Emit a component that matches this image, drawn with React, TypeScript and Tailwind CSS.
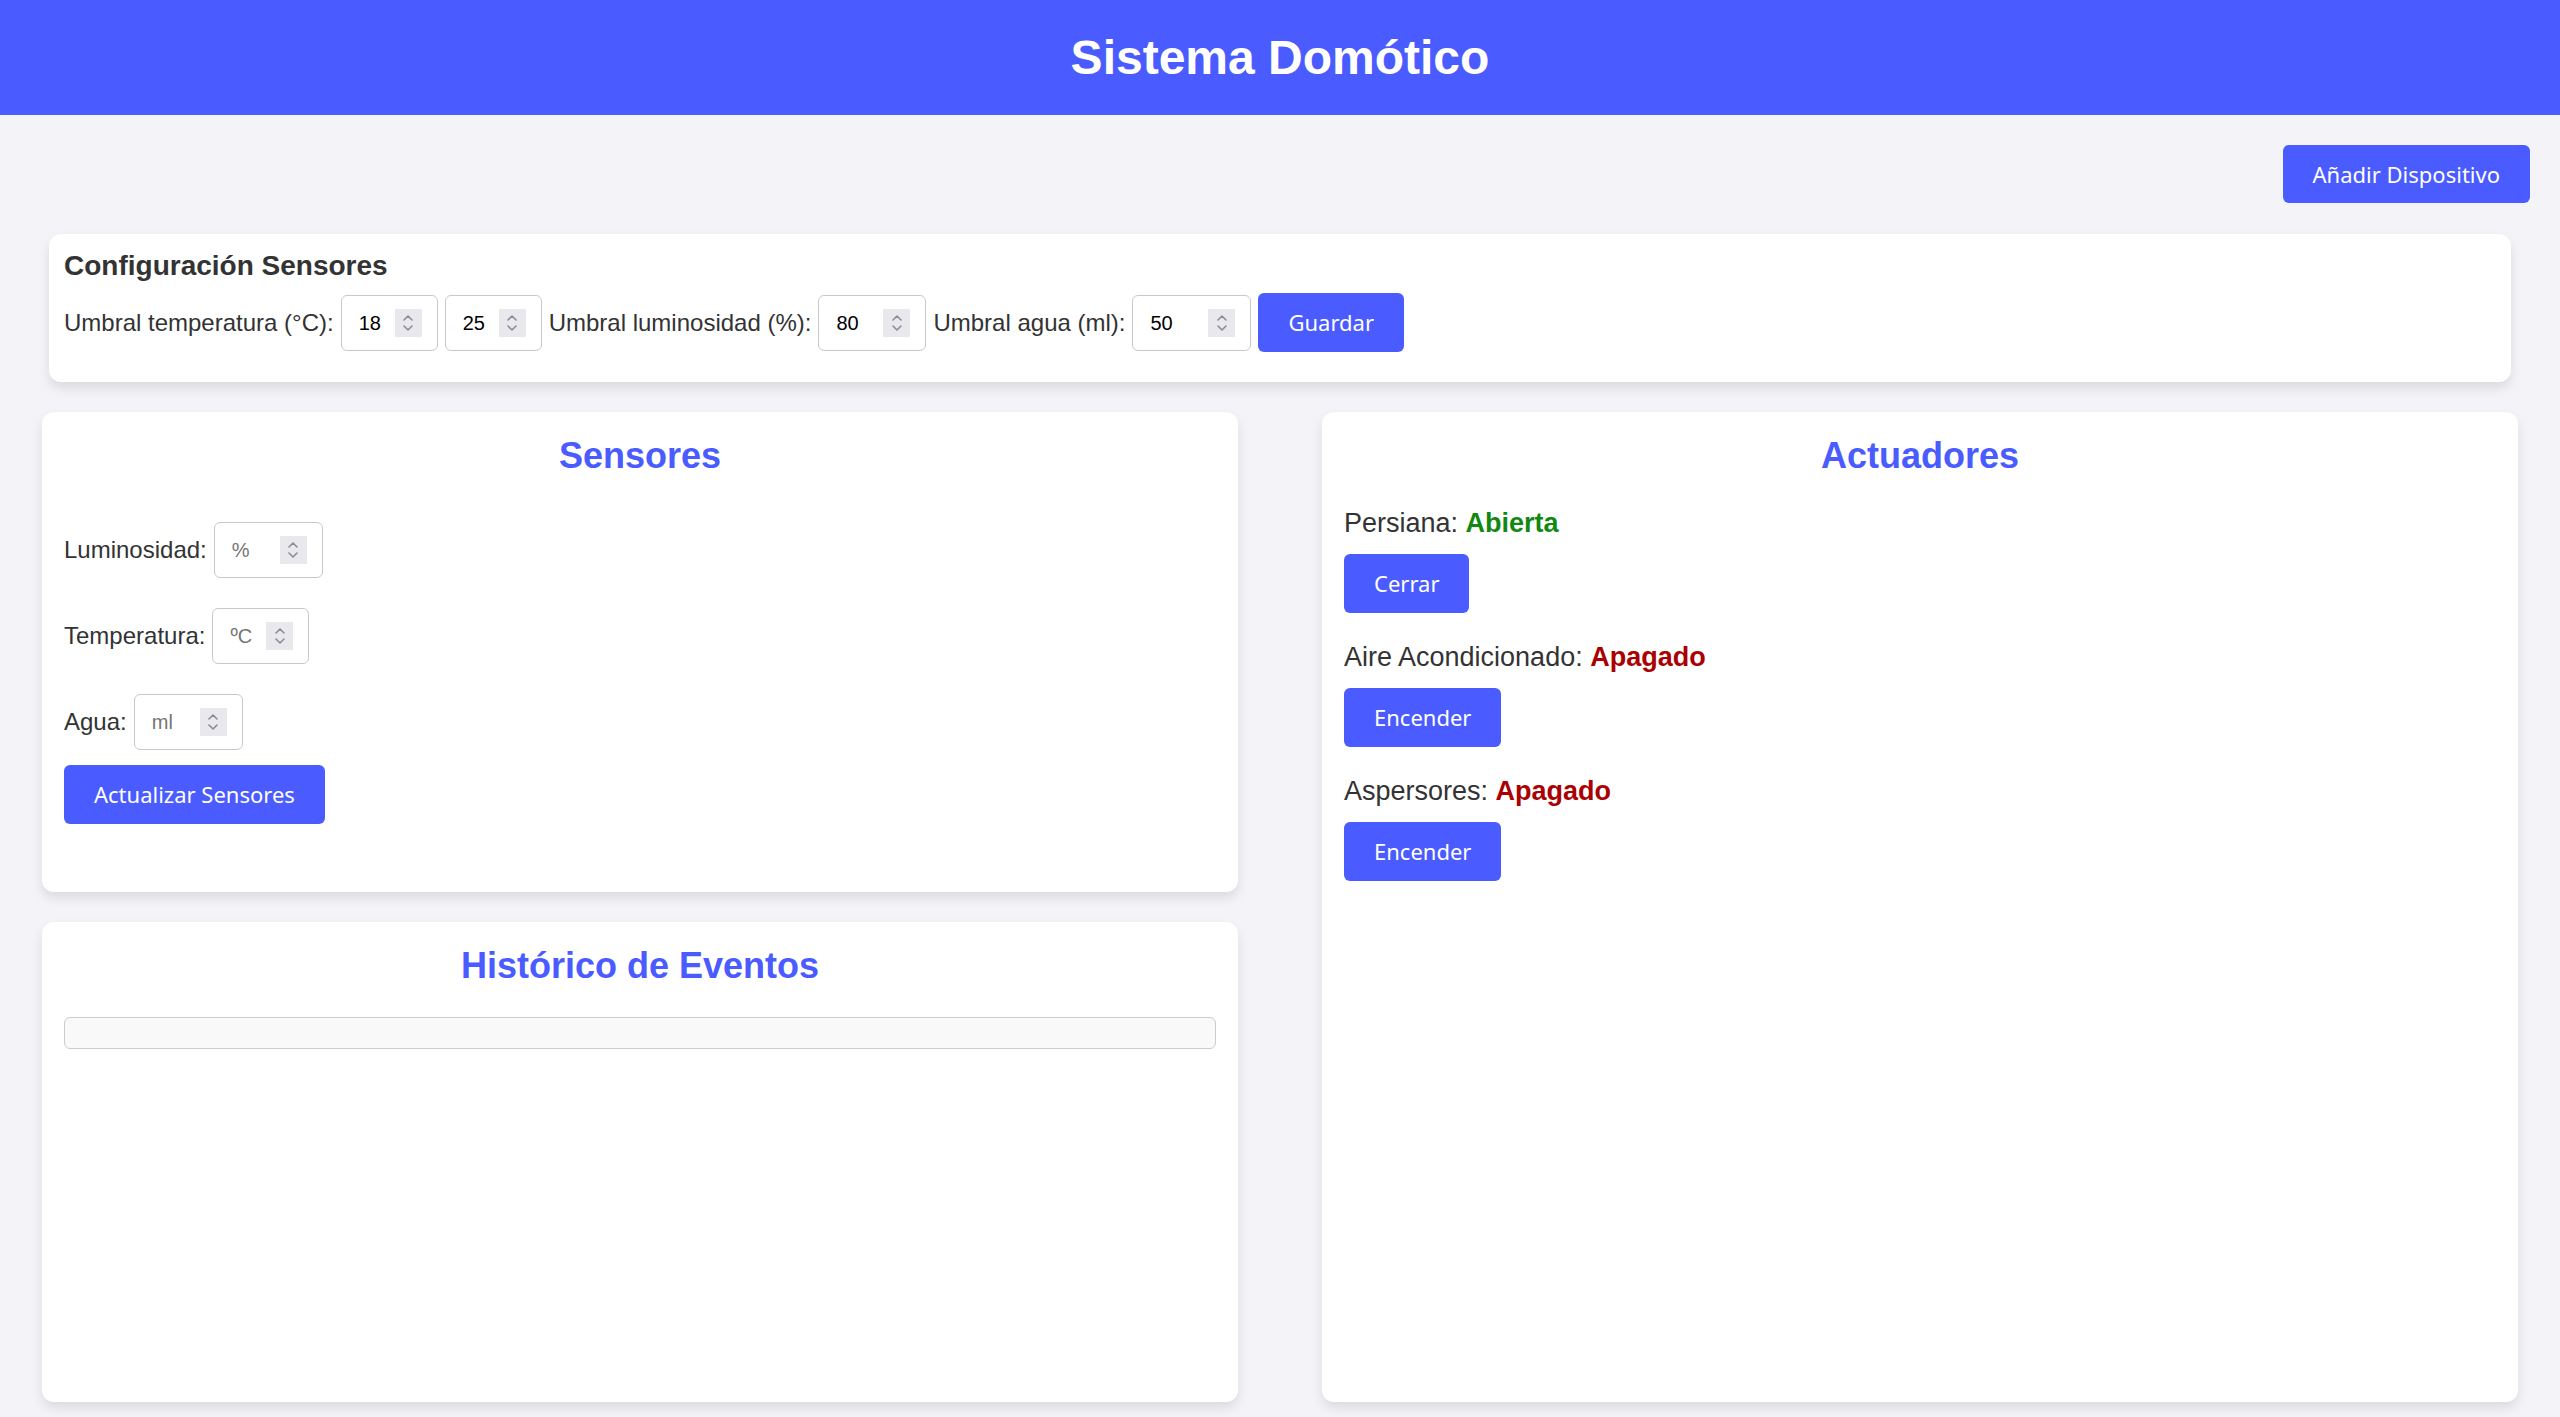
import type { ReactNode } from 'react'

const BLUE = 'bg-[#4a5bff]'

function Spinner() {
  return (
    <span className="flex h-[28px] w-[27px] shrink-0 items-center justify-center bg-[#e9e9ed]">
      <svg width="14" height="22" viewBox="0 0 14 22" fill="none" stroke="#8b8b98" strokeWidth="1.6" strokeLinecap="round" strokeLinejoin="round">
        <path d="M3 8 L7 4 L11 8" />
        <path d="M3 14 L7 18 L11 14" />
      </svg>
    </span>
  )
}

function NumInput({ value, placeholder, width }: { value?: string; placeholder?: string; width: string }) {
  return (
    <span
      className={`flex h-[56px] shrink-0 items-center rounded-[6px] border border-[#c8c8cc] bg-white pr-[15px] pl-[17px] text-[20px] ${width}`}
    >
      <span className={`flex-1 leading-none ${value ? 'text-black' : 'text-[#757575]'}`}>{value ?? placeholder}</span>
      <Spinner />
    </span>
  )
}

function Btn({ children }: { children: ReactNode }) {
  return (
    <button
      type="button"
      className={`${BLUE} flex h-[59px] shrink-0 items-center justify-center rounded-[6px] px-[30px] font-['Noto_Sans',sans-serif] text-[22px] text-white`}
    >
      {children}
    </button>
  )
}

function Card({ children, className = '' }: { children: ReactNode; className?: string }) {
  return (
    <div className={`rounded-[12px] bg-white shadow-[0_6px_12px_rgba(0,0,0,0.1)] ${className}`}>{children}</div>
  )
}

function CardTitle({ children }: { children: ReactNode }) {
  return <h2 className="text-center text-[36px] leading-[41px] font-bold text-[#4a5bff]">{children}</h2>
}

function SensorRow({ label, placeholder, width }: { label: string; placeholder: string; width: string }) {
  return (
    <div className="flex items-center gap-[7px]">
      <span>{label}</span>
      <NumInput placeholder={placeholder} width={width} />
    </div>
  )
}

function Actuator({ name, state, on, action }: { name: string; state: string; on: boolean; action: string }) {
  return (
    <div className="flex flex-col items-start">
      <p className="text-[27px] leading-[31px]">
        {name}: <span className={`font-bold ${on ? 'text-[#118811]' : 'text-[#aa0000]'}`}>{state}</span>
      </p>
      <div className="mt-[15px]">
        <Btn>{action}</Btn>
      </div>
    </div>
  )
}

export default function App() {
  return (
    <div className="min-h-screen bg-[#f4f4f8] font-['Liberation_Sans',Arial,sans-serif] text-[24px] text-[#333]">
      <header className={`${BLUE} flex h-[115px] items-center justify-center`}>
        <h1 className="text-[48px] font-bold text-white">Sistema Domótico</h1>
      </header>

      <div className="flex justify-end pt-[30px] pr-[30px]">
        <button
          type="button"
          className={`${BLUE} flex h-[58px] items-center rounded-[6px] px-[30px] font-['Noto_Sans',sans-serif] text-[22px] text-white`}
        >
          Añadir Dispositivo
        </button>
      </div>

      <Card className="mx-[49px] mt-[31px] px-[15px] pt-[16px] pb-[30px]">
        <h3 className="text-[28px] leading-[32px] font-bold">Configuración Sensores</h3>
        <div className="mt-[11px] flex items-center gap-[7px]">
          <span>Umbral temperatura (°C):</span>
          <NumInput value="18" width="w-[97px]" />
          <NumInput value="25" width="w-[97px]" />
          <span>Umbral luminosidad (%):</span>
          <NumInput value="80" width="w-[108px]" />
          <span>Umbral agua (ml):</span>
          <NumInput value="50" width="w-[119px]" />
          <Btn>Guardar</Btn>
        </div>
      </Card>

      <div className="mt-[30px] grid grid-cols-2 grid-rows-[480px_480px] gap-x-[84px] gap-y-[30px] px-[42px] pb-[15px]">
        <Card className="px-[22px] pt-[23px]">
          <CardTitle>Sensores</CardTitle>
          <div className="mt-[46px] flex flex-col gap-[30px]">
            <SensorRow label="Luminosidad:" placeholder="%" width="w-[109px]" />
            <SensorRow label="Temperatura:" placeholder="ºC" width="w-[97px]" />
            <SensorRow label="Agua:" placeholder="ml" width="w-[109px]" />
          </div>
          <div className="mt-[15px] flex">
            <Btn>Actualizar Sensores</Btn>
          </div>
        </Card>

        <Card className="row-span-2 px-[22px] pt-[23px]">
          <CardTitle>Actuadores</CardTitle>
          <div className="mt-[32px] flex flex-col gap-[29px]">
            <Actuator name="Persiana" state="Abierta" on action="Cerrar" />
            <Actuator name="Aire Acondicionado" state="Apagado" on={false} action="Encender" />
            <Actuator name="Aspersores" state="Apagado" on={false} action="Encender" />
          </div>
        </Card>

        <Card className="px-[22px] pt-[23px]">
          <CardTitle>Histórico de Eventos</CardTitle>
          <ul className="mt-[31px] h-[32px] rounded-[6px] border border-[#cccccc] bg-[#f9f9f9]" />
        </Card>
      </div>
    </div>
  )
}
